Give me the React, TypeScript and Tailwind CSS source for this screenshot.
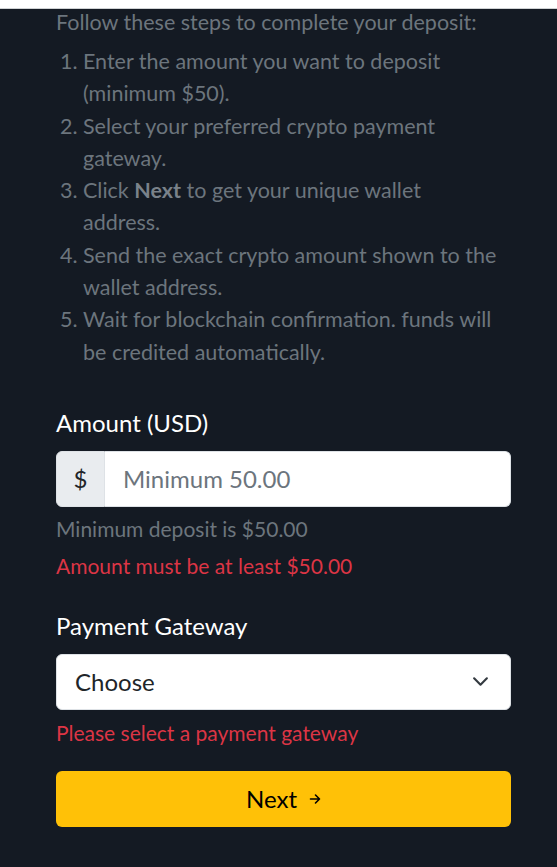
export default function App() {
  return (
    <div className="min-h-[867px] bg-[#141a23]" style={{ fontFamily: "Lato, 'Noto Sans', sans-serif" }}>
      <div className="h-[9px] bg-white border-b border-[#cfd2d4]" />
      <div className="ml-[56px] w-[455px]">
        <p className="text-[21.5px] leading-[26px] text-[#6c757d]">Follow these steps to complete your deposit:</p>
        <ol className="mt-[10px] list-decimal pl-[27px] text-[21.5px] leading-[32.3px] text-[#6c757d]">
          <li>
            Enter the amount you want to deposit
            <br />
            (minimum $50).
          </li>
          <li>
            Select your preferred crypto payment
            <br />
            gateway.
          </li>
          <li>
            Click <strong className="font-bold text-[#7a828a]">Next</strong> to get your unique wallet
            <br />
            address.
          </li>
          <li>
            Send the exact crypto amount shown to the
            <br />
            wallet address.
          </li>
          <li>
            Wait for blockchain confirmation. funds will
            <br />
            be credited automatically.
          </li>
        </ol>

        <label className="mt-[37px] block text-[24px] leading-[36px] text-white">Amount (USD)</label>
        <div className="mt-[10px] flex h-[56px]">
          <div className="flex w-[49px] items-center justify-center rounded-l-[6px] border border-[#dee2e6] bg-[#e9ecef] text-[24px] text-[#212529]">
            $
          </div>
          <div className="flex flex-1 items-center rounded-r-[6px] border border-l-0 border-[#dee2e6] bg-white pl-[18px] text-[24px] text-[#6c757d]">
            Minimum 50.00
          </div>
        </div>
        <div className="mt-[6px] text-[21px] leading-[31.5px] text-[#6c757d]">Minimum deposit is $50.00</div>
        <div className="mt-[6px] text-[21px] leading-[31.5px] text-[#dc3545]">Amount must be at least $50.00</div>

        <label className="mt-[26px] block text-[24px] leading-[36px] text-white">Payment Gateway</label>
        <div className="mt-[10px] flex h-[56px] items-center justify-between rounded-[6px] border border-[#dee2e6] bg-white pl-[18px] pr-[21px]">
          <span className="text-[24px] text-[#212529]">Choose</span>
          <svg width="17" height="17" viewBox="0 0 16 16" fill="none" stroke="#343a40" strokeWidth="2" strokeLinecap="round" strokeLinejoin="round">
            <path d="M2 5l6 6 6-6" />
          </svg>
        </div>
        <div className="mt-[7px] text-[21px] leading-[31.5px] text-[#dc3545]">Please select a payment gateway</div>

        <button className="mt-[22.5px] flex h-[56px] w-full items-center justify-center gap-[12px] rounded-[6px] bg-[#ffc107] text-[24px] text-black">
          <span>Next</span>
          <svg width="12" height="12" viewBox="0 0 12 12" fill="none" stroke="#000" strokeWidth="1.6" strokeLinecap="round" strokeLinejoin="round">
            <path d="M1.5 6h9M6.5 2l4 4-4 4" />
          </svg>
        </button>
      </div>
    </div>
  );
}
